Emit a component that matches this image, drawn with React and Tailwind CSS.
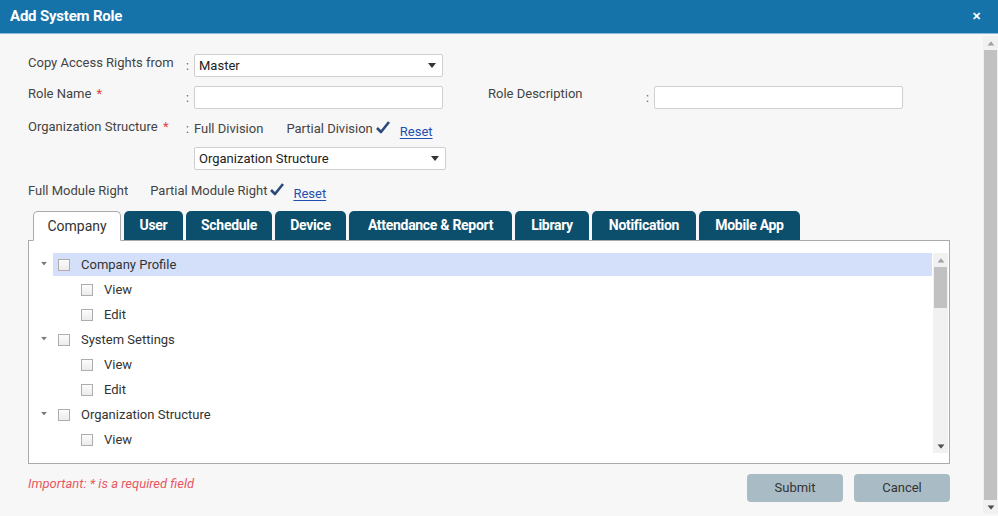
import React from 'react';

const tabs = [
  { label: 'Company', w: 'w-[88px]' },
  { label: 'User', w: 'w-[59px]' },
  { label: 'Schedule', w: 'w-[86px]' },
  { label: 'Device', w: 'w-[71px]' },
  { label: 'Attendance & Report', w: 'w-[163px]' },
  { label: 'Library', w: 'w-[74px]' },
  { label: 'Notification', w: 'w-[104px]' },
  { label: 'Mobile App', w: 'w-[101px]' },
];

const tree = [
  { label: 'Company Profile', level: 0, active: true },
  { label: 'View', level: 1 },
  { label: 'Edit', level: 1 },
  { label: 'System Settings', level: 0 },
  { label: 'View', level: 1 },
  { label: 'Edit', level: 1 },
  { label: 'Organization Structure', level: 0 },
  { label: 'View', level: 1 },
];

const Caret = ({ className = '' }) => (
  <svg width="8" height="5" viewBox="0 0 8 5" className={className}>
    <path d="M0 0 H8 L4 5 Z" fill="currentColor" />
  </svg>
);

const Check = () => (
  <svg width="14" height="13" viewBox="0 0 14 13" className="inline-block ml-[3px] -mt-[3px]">
    <path d="M1 7 L5 11 L13 1" fill="none" stroke="#2c4a7c" strokeWidth="2.6" strokeLinejoin="round" />
  </svg>
);

const Box = () => (
  <span className="w-[12px] h-[12px] border border-[#adadad] bg-gradient-to-b from-[#fcfcfc] to-[#ececec] shrink-0" />
);

const Select = ({ value, width }) => (
  <div className={`${width} h-[23px] bg-white border border-[#cfcfcf] rounded-[2px] flex items-center justify-between pl-[4px] pr-[6px] text-[13px] text-[#222]`}>
    <span>{value}</span>
    <Caret className="text-[#333]" />
  </div>
);

const Colon = () => <span className="w-[8px] text-[#555] text-[12px] leading-none">:</span>;

const ScrollBar = ({ thumbClass }) => (
  <div className="w-[15px] bg-[#f1f1f1] flex flex-col items-center">
    <div className="h-[14px] flex items-center justify-center">
      <Caret className="rotate-180 text-[#a3a3a3] scale-90" />
    </div>
    <div className={`w-[13px] bg-[#c1c1c1] ${thumbClass}`} />
    <div className="flex-1" />
    <div className="h-[14px] flex items-center justify-center">
      <Caret className="text-[#505050] scale-90" />
    </div>
  </div>
);

export default function App() {
  return (
    <div className="w-[998px] h-[516px] flex flex-col bg-[#f7f7f7] overflow-hidden font-['Roboto',sans-serif] text-[#444]">
      {/* Header */}
      <div className="h-[34px] shrink-0 bg-[#1673aa] border-b border-[#8cbad8] flex items-center justify-between pl-[10px] pr-[17px]">
        <span className="text-white font-bold text-[15px] tracking-[-0.2px]">Add System Role</span>
        <span className="text-white font-bold text-[11px] leading-none">✕</span>
      </div>

      <div className="flex-1 flex min-h-0">
        <div className="flex-1 pl-[28px] pr-[33px] pt-[20px] text-[13px]">
          {/* Copy Access Rights */}
          <div className="flex items-center h-[23px]">
            <span className="w-[158px] -mt-[6px]">Copy Access Rights from</span>
            <Colon />
            <Select value="Master" width="w-[249px]" />
          </div>

          {/* Role name / description */}
          <div className="flex items-center h-[23px] mt-[9px]">
            <span className="w-[158px] -mt-[7px]">Role Name <span className="text-[#e0403f] ml-[2px]">*</span></span>
            <Colon />
            <div className="w-[249px] h-[23px] bg-white border border-[#cfcfcf] rounded-[2px]" />
            <span className="w-[158px] ml-[45px] -mt-[7px]">Role Description</span>
            <Colon />
            <div className="w-[249px] h-[23px] bg-white border border-[#cfcfcf] rounded-[2px]" />
          </div>

          {/* Organization structure */}
          <div className="flex items-center h-[20px] mt-[10px]">
            <span className="w-[158px] -mt-[4px]">Organization Structure <span className="text-[#e0403f] ml-[2px]">*</span></span>
            <Colon />
            <span className="mr-[23px]">Full Division</span>
            <span>Partial Division</span>
            <Check />
            <a className="ml-[10px] mt-[5px] text-[#1f4fb0] underline underline-offset-2">Reset</a>
          </div>
          <div className="ml-[166px] mt-[8px]">
            <Select value="Organization Structure" width="w-[252px]" />
          </div>

          {/* Module right */}
          <div className="flex items-center h-[20px] mt-[11px]">
            <span className="mr-[22px]">Full Module Right</span>
            <span>Partial Module Right</span>
            <Check />
            <a className="ml-[9px] mt-[5px] text-[#1f4fb0] underline underline-offset-2">Reset</a>
          </div>

          {/* Tabs */}
          <div className="flex items-end h-[29px] mt-[10px] pl-[5px] gap-[3px]">
            {tabs.map((t, i) =>
              i === 0 ? (
                <div key={t.label} className={`${t.w} h-[30px] -mb-px relative z-10 bg-white border border-[#aaa] border-b-white rounded-t-[5px] flex items-center justify-center text-[14px] text-[#333]`}>
                  {t.label}
                </div>
              ) : (
                <div key={t.label} className={`${t.w} h-[29px] bg-[#0c4f6d] rounded-t-[5px] flex items-center justify-center text-[14px] font-bold text-white tracking-[-0.3px]`}>
                  {t.label}
                </div>
              )
            )}
          </div>

          {/* Tree panel */}
          <div className="h-[224px] bg-white border border-[#aaa] pt-[12px] pb-[10px] pl-[6px] flex">
            <div className="flex-1 flex flex-col gap-[2px] pr-[1px]">
              {tree.map((r, i) => (
                <div key={i} className="h-[23px] flex items-center shrink-0">
                  {r.level === 0 ? (
                    <>
                      <span className="w-[18px] flex justify-center -mt-[3px]">
                        <Caret className="text-[#7a7a7a] scale-75" />
                      </span>
                      <div className={`flex-1 h-[23px] flex items-center pl-[5px] ${r.active ? 'bg-[#d4e0fa]' : ''}`}>
                        <Box />
                        <span className="ml-[11px] text-[#333]">{r.label}</span>
                      </div>
                    </>
                  ) : (
                    <div className="flex items-center pl-[46px]">
                      <Box />
                      <span className="ml-[11px] text-[#333]">{r.label}</span>
                    </div>
                  )}
                </div>
              ))}
            </div>
            <ScrollBar thumbClass="h-[41px]" />
            <div className="w-[1px]" />
          </div>

          {/* Footer */}
          <div className="flex items-start justify-between mt-[10px]">
            <span className="text-[#e8575f] italic text-[13px]">Important: * is a required field</span>
            <div className="flex gap-[11px]">
              <button className="w-[96px] h-[28px] rounded-[4px] bg-[#a9bcc6] text-[#333] text-[13px]">Submit</button>
              <button className="w-[96px] h-[28px] rounded-[4px] bg-[#a9bcc6] text-[#333] text-[13px]">Cancel</button>
            </div>
          </div>
        </div>

        {/* Page scrollbar */}
        <div className="flex flex-col pt-[2px]">
          <ScrollBar thumbClass="h-[450px]" />
        </div>
      </div>
    </div>
  );
}
